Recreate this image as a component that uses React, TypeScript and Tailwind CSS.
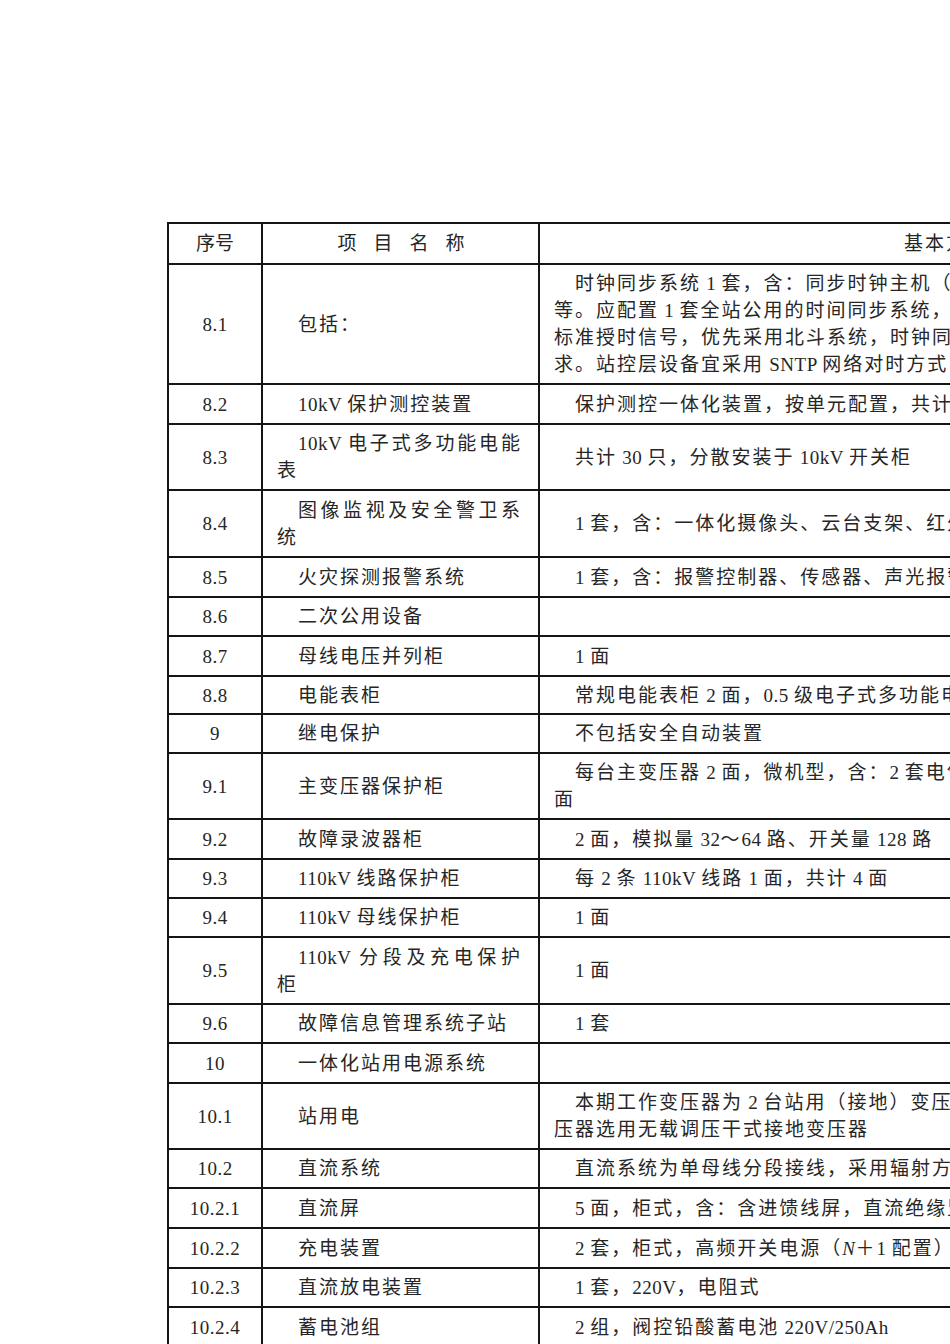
import React from 'react'

type Row = {
  no: string
  name: string
  desc: string[]
  h: string
}

const rows: Row[] = [
  {
    no: '8.1',
    name: '包括：',
    desc: [
      '时钟同步系统 1 套，含：同步时钟主机（2 台）、扩展装置及天线',
      '等。应配置 1 套全站公用的时间同步系统，主时钟应双重化配置',
      '标准授时信号，优先采用北斗系统，时钟同步精度满足站内设备要',
      '求。站控层设备宜采用 SNTP 网络对时方式，间隔层设备采用 IRIG-B',
    ],
    h: 'h-[120px]',
  },
  { no: '8.2', name: '10kV 保护测控装置', desc: ['保护测控一体化装置，按单元配置，共计 30 套'], h: 'h-[40px]' },
  { no: '8.3', name: '10kV 电子式多功能电能表', desc: ['共计 30 只，分散安装于 10kV 开关柜'], h: 'h-[66px]' },
  { no: '8.4', name: '图像监视及安全警卫系统', desc: ['1 套，含：一体化摄像头、云台支架、红外对射装置'], h: 'h-[67px]' },
  { no: '8.5', name: '火灾探测报警系统', desc: ['1 套，含：报警控制器、传感器、声光报警器'], h: 'h-[40px]' },
  { no: '8.6', name: '二次公用设备', desc: [], h: 'h-[39px]' },
  { no: '8.7', name: '母线电压并列柜', desc: ['1 面'], h: 'h-[40px]' },
  { no: '8.8', name: '电能表柜', desc: ['常规电能表柜 2 面，0.5 级电子式多功能电能表 6 只'], h: 'h-[38px]' },
  { no: '9', name: '继电保护', desc: ['不包括安全自动装置'], h: 'h-[39px]' },
  {
    no: '9.1',
    name: '主变压器保护柜',
    desc: ['每台主变压器 2 面，微机型，含：2 套电气量保护、1 套非电量保护，共计 4', '面'],
    h: 'h-[66px]',
  },
  { no: '9.2', name: '故障录波器柜', desc: ['2 面，模拟量 32～64 路、开关量 128 路'], h: 'h-[40px]' },
  { no: '9.3', name: '110kV 线路保护柜', desc: ['每 2 条 110kV 线路 1 面，共计 4 面'], h: 'h-[39px]' },
  { no: '9.4', name: '110kV 母线保护柜', desc: ['1 面'], h: 'h-[39px]' },
  { no: '9.5', name: '110kV 分段及充电保护柜', desc: ['1 面'], h: 'h-[67px]' },
  { no: '9.6', name: '故障信息管理系统子站', desc: ['1 套'], h: 'h-[39px]' },
  { no: '10', name: '一体化站用电源系统', desc: [], h: 'h-[40px]' },
  {
    no: '10.1',
    name: '站用电',
    desc: ['本期工作变压器为 2 台站用（接地）变压器，容量 400kVA，站用变', '压器选用无载调压干式接地变压器'],
    h: 'h-[66px]',
  },
  { no: '10.2', name: '直流系统', desc: ['直流系统为单母线分段接线，采用辐射方式供电'], h: 'h-[39px]' },
  { no: '10.2.1', name: '直流屏', desc: ['5 面，柜式，含：含进馈线屏，直流绝缘监测装置'], h: 'h-[40px]' },
  { no: '10.2.2', name: '充电装置', desc: ['2 套，柜式，高频开关电源（*N*＋1 配置）'], h: 'h-[40px]' },
  { no: '10.2.3', name: '直流放电装置', desc: ['1 套，220V，电阻式'], h: 'h-[39px]' },
  { no: '10.2.4', name: '蓄电池组', desc: ['2 组，阀控铅酸蓄电池 220V/250Ah'], h: 'h-[40px]' },
]

// latin runs keep near-normal spacing, CJK runs get the document grid pitch
function Txt({ s }: { s: string }) {
  const parts = s.split(/(\*[^*]+\*|[\x20-\x7e]+)/).filter(Boolean)
  return (
    <>
      {parts.map((p, i) => {
        if (p.length > 2 && p.startsWith('*') && p.endsWith('*')) {
          return (
            <span key={i} className="italic tracking-[0.5px]">
              {p.slice(1, -1)}
            </span>
          )
        }
        if (/^[\x20-\x7e]+$/.test(p)) {
          return (
            <span key={i} className="tracking-[0.5px]">
              {p}
            </span>
          )
        }
        return (
          <span key={i} className="tracking-[2px]">
            {p}
          </span>
        )
      })}
    </>
  )
}

export default function App() {
  return (
    <div
      lang="zh-CN"
      className="w-[950px] h-[1344px] overflow-hidden bg-white text-[#262626] text-[19px] leading-[27px]"
      style={{ fontFamily: "'Liberation Serif', 'Noto Sans CJK SC', serif" }}
    >
      <table className="mt-[222px] ml-[167px] border-collapse table-fixed w-[1185px]">
        <colgroup>
          <col className="w-[94px]" />
          <col className="w-[277px]" />
          <col className="w-[814px]" />
        </colgroup>
        <thead>
          <tr className="h-[41px]">
            <th className="border-2 border-[#151515] font-normal text-center align-middle">序号</th>
            <th className="border-2 border-[#151515] font-normal text-center align-middle pl-[18px]">
              <span className="tracking-[17px]">项目名称</span>
            </th>
            <th className="border-2 border-[#151515] font-normal text-center align-middle">
              <span className="tracking-[2px]">基本方案</span>
            </th>
          </tr>
        </thead>
        <tbody>
          {rows.map((r) => (
            <tr key={r.no} className={r.h}>
              <td className="border-2 border-[#151515] text-center align-middle tracking-[0.5px]">{r.no}</td>
              <td className="border-2 border-[#151515] align-middle pl-[14px] pr-[16px] text-justify indent-[21px]">
                <Txt s={r.name} />
              </td>
              <td className="border-2 border-[#151515] align-middle pl-[14px] pr-[14px] overflow-hidden">
                {r.desc.map((line, i) => (
                  <div key={i} className={i === 0 ? 'whitespace-nowrap indent-[21px]' : 'whitespace-nowrap'}>
                    <Txt s={line} />
                  </div>
                ))}
              </td>
            </tr>
          ))}
        </tbody>
      </table>
    </div>
  )
}
